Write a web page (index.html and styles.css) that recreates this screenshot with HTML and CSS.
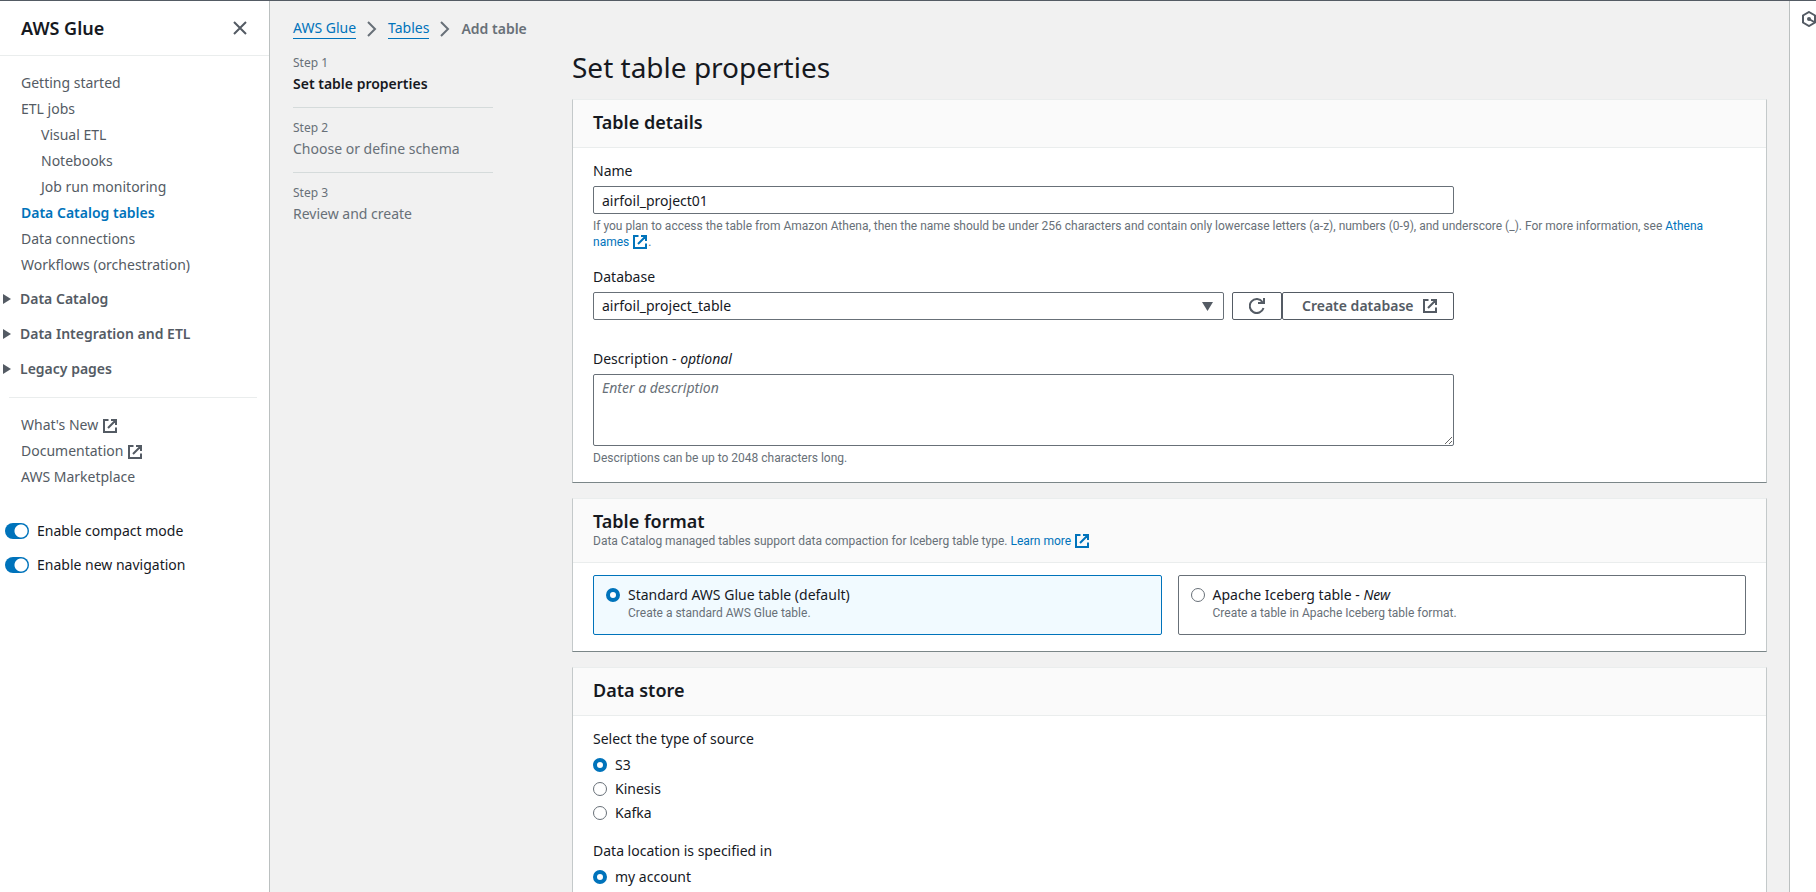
FILE: index.html
```html
<!DOCTYPE html>
<html lang="en">
<head>
<meta charset="utf-8">
<title>Add table - AWS Glue</title>
<link rel="stylesheet" href="styles.css">
</head>
<body>
<svg class="sprite" aria-hidden="true">
  <symbol id="external" viewBox="0 0 16 16"><path d="M9 2h5v5M6 10l8-8M14 9.500V14H2V2h4.500" fill="none" stroke="currentColor" stroke-width="2"/></symbol>
  <symbol id="chevron" viewBox="0 0 16 16"><path d="M4 1l7 7-7 7" fill="none" stroke="currentColor" stroke-width="2"/></symbol>
</svg>
<div class="app">
  <nav class="sidebar" aria-label="AWS Glue">
    <div class="sidebar-head">
      <h2 class="sidebar-title">AWS Glue</h2>
      <button class="icon-button" type="button" aria-label="Close navigation">
        <svg class="icon" viewBox="0 0 16 16"><path d="M2 2l12 12M14 2L2 14" fill="none" stroke="currentColor" stroke-width="2"/></svg>
      </button>
    </div>
    <ul class="nav-list nav-main">
      <li><a href="#">Getting started</a></li>
      <li><a href="#">ETL jobs</a>
        <ul class="nav-list nav-sub">
          <li><a href="#">Visual ETL</a></li>
          <li><a href="#">Notebooks</a></li>
          <li><a href="#">Job run monitoring</a></li>
        </ul>
      </li>
      <li><a class="active" href="#">Data Catalog tables</a></li>
      <li><a href="#">Data connections</a></li>
      <li><a href="#">Workflows (orchestration)</a></li>
    </ul>
    <div class="sections">
      <button class="section" type="button" aria-expanded="false"><svg class="caret" viewBox="0 0 8 10"><path d="M0 0l8 5-8 5z" fill="currentColor"/></svg>Data Catalog</button>
      <button class="section" type="button" aria-expanded="false"><svg class="caret" viewBox="0 0 8 10"><path d="M0 0l8 5-8 5z" fill="currentColor"/></svg>Data Integration and ETL</button>
      <button class="section" type="button" aria-expanded="false"><svg class="caret" viewBox="0 0 8 10"><path d="M0 0l8 5-8 5z" fill="currentColor"/></svg>Legacy pages</button>
    </div>
    <ul class="nav-list nav-links">
      <li><a href="#">What's New <svg class="icon"><use href="#external"/></svg></a></li>
      <li><a href="#">Documentation <svg class="icon"><use href="#external"/></svg></a></li>
      <li><a href="#">AWS Marketplace</a></li>
    </ul>
    <div class="toggles">
      <label class="toggle"><input class="switch" type="checkbox" checked>Enable compact mode</label>
      <label class="toggle"><input class="switch" type="checkbox" checked>Enable new navigation</label>
    </div>
  </nav>

  <main class="main">
    <nav class="breadcrumb" aria-label="Breadcrumbs">
      <a href="#">AWS Glue</a><svg class="icon"><use href="#chevron"/></svg><a href="#">Tables</a><svg class="icon"><use href="#chevron"/></svg><span class="current">Add table</span>
    </nav>
    <div class="wizard">
      <ol class="steps">
        <li class="step step-active"><span class="step-number">Step 1</span><span>Set table properties</span></li>
        <li class="step"><span class="step-number">Step 2</span><span>Choose or define schema</span></li>
        <li class="step"><span class="step-number">Step 3</span><span>Review and create</span></li>
      </ol>
      <form class="content">
        <h1 class="page-title">Set table properties</h1>

        <section class="card">
          <header class="card-head"><h2>Table details</h2></header>
          <div class="card-body">
            <div class="field">
              <label class="label" for="name">Name</label>
              <input class="control narrow" id="name" type="text" value="airfoil_project01">
              <p class="hint">If you plan to access the table from Amazon Athena, then the name should be under 256 characters and contain only lowercase letters (a-z), numbers (0-9), and underscore (_). For more information, see <a href="#">Athena <span class="nowrap">names <svg class="icon"><use href="#external"/></svg></span></a>.</p>
            </div>
            <div class="field">
              <label class="label" for="database">Database</label>
              <div class="row narrow">
                <div class="select-wrap">
                  <select class="control select" id="database"><option>airfoil_project_table</option></select>
                  <svg class="select-caret" viewBox="0 0 11 9"><path d="M0 0h11L5.500 9z" fill="currentColor"/></svg>
                </div>
                <div class="actions">
                  <button class="button refresh" type="button" aria-label="Refresh databases"><svg class="icon" viewBox="0 0 16 16"><path d="M14.500 10A7 7 0 1 1 13.500 4M15 0v5H9" fill="none" stroke="currentColor" stroke-width="2"/></svg></button>
                  <button class="button create" type="button">Create database <svg class="icon"><use href="#external"/></svg></button>
                </div>
              </div>
            </div>
            <div class="field field-last">
              <label class="label" for="description">Description - <i>optional</i></label>
              <textarea class="control narrow area" id="description" placeholder="Enter a description"></textarea>
              <p class="hint">Descriptions can be up to 2048 characters long.</p>
            </div>
          </div>
        </section>

        <section class="card">
          <header class="card-head"><h2>Table format</h2><p class="subtitle">Data Catalog managed tables support data compaction for Iceberg table type. <a href="#">Learn more <svg class="icon"><use href="#external"/></svg></a></p></header>
          <div class="tiles">
            <label class="tile tile-selected"><input class="radio" type="radio" name="format" checked><span>Standard AWS Glue table (default)<small>Create a standard AWS Glue table.</small></span></label>
            <label class="tile"><input class="radio" type="radio" name="format"><span>Apache Iceberg table - <i>New</i><small>Create a table in Apache Iceberg table format.</small></span></label>
          </div>
        </section>

        <section class="card">
          <header class="card-head"><h2>Data store</h2></header>
          <div class="card-body">
            <fieldset class="group">
              <legend>Select the type of source</legend>
              <label class="option"><input class="radio" type="radio" name="source" checked>S3</label>
              <label class="option"><input class="radio" type="radio" name="source">Kinesis</label>
              <label class="option"><input class="radio" type="radio" name="source">Kafka</label>
            </fieldset>
            <fieldset class="group">
              <legend>Data location is specified in</legend>
              <label class="option"><input class="radio" type="radio" name="location" checked>my account</label>
            </fieldset>
          </div>
        </section>
      </form>
    </div>
  </main>

  <aside class="tools">
    <button class="icon-button" type="button" aria-label="Open tools">
      <svg class="icon" viewBox="0 0 16 16"><path d="M8 1l6 3.500v7L8 15l-6-3.500v-7zM8 8l6 3.500" fill="none" stroke="currentColor" stroke-width="2"/><circle cx="8" cy="8" r="2" fill="currentColor"/></svg>
    </button>
  </aside>
</div>
</body>
</html>
```
FILE: styles.css
```css
* { box-sizing: border-box; }

body {
  margin: 0;
  height: 100vh;
  overflow: hidden;
  background: #f1f1f1;
  color: #16191f;
  font: 14px/20px "Noto Sans", "Open Sans", sans-serif;
}

h1, h2, p, ul, ol, fieldset { margin: 0; padding: 0; }
h2 { font-weight: 600; }
ul, ol { list-style: none; }
a { color: #0073bb; text-decoration: none; }
button, input, select, textarea { font: inherit; color: inherit; }
button { cursor: pointer; }

.sprite { display: none; }
.nowrap { white-space: nowrap; }
.icon { width: 16px; height: 16px; flex: none; vertical-align: middle; }

.app {
  display: flex;
  height: 100%;
  border-top: 1px solid #545b64;
}

.icon-button {
  display: flex;
  padding: 0;
  border: 0;
  background: none;
  color: #545b64;
}

/* Side navigation */
.sidebar {
  flex: 0 0 270px;
  border-right: 1px solid #bbc0c0;
  background: #fff;
  color: #545b64;
}

.sidebar-head {
  display: flex;
  align-items: center;
  justify-content: space-between;
  height: 55px;
  padding: 0 21px;
  border-bottom: 1px solid #eaeded;
}

.sidebar-title { color: #16191f; font-size: 18px; line-height: 22px; }
.nav-list a { display: block; padding: 3px 0; color: #545b64; }
.nav-list a.active { color: #0073bb; font-weight: 600; }
.nav-main { padding: 14px 21px 0; }
.nav-sub { padding-left: 20px; }

.sections {
  display: flex;
  flex-direction: column;
  gap: 15px;
  margin: 11px 12px 0 3px;
  padding-bottom: 18px;
}

.section {
  display: flex;
  align-items: center;
  gap: 9px;
  padding: 0;
  border: 0;
  background: none;
  font-weight: 600;
}

.caret { width: 8px; height: 10px; }

.nav-links {
  margin: 0 12px 0 9px;
  padding: 14px 12px 0;
  border-top: 1px solid #eaeded;
}

.toggles {
  display: flex;
  flex-direction: column;
  gap: 14px;
  padding: 31px 5px 0;
  color: #16191f;
}

.toggle { display: flex; align-items: center; gap: 8px; }

.switch {
  appearance: none;
  width: 24px;
  height: 16px;
  margin: 0;
  border-radius: 8px;
  background: #0073bb radial-gradient(circle at 16px 8px, #fff 6px, transparent 7px);
}

/* Main column */
.main { flex: 1; min-width: 0; padding: 17px 22px 0 23px; }

.breadcrumb { display: flex; align-items: center; gap: 8px; color: #687078; }
.breadcrumb a { border-bottom: 1px solid #0073bb; }
.current { font-weight: 600; }

.wizard { display: flex; justify-content: space-between; gap: 79px; }

.steps { flex: 0 0 200px; padding-top: 16px; color: #687078; }

.step {
  display: flex;
  flex-direction: column;
  gap: 3px;
  margin-bottom: 12px;
  padding-bottom: 13px;
  border-bottom: 1px solid #d5dbdb;
}

.step:last-child { border-bottom: 0; }
.step-active { color: #16191f; font-weight: 600; }
.step-number { color: #687078; font-size: 12px; font-weight: 400; line-height: 16px; }

.content { flex: 1; min-width: 0; }
.page-title { padding: 10px 0 14px; font-size: 28px; font-weight: 400; line-height: 36px; }

.card {
  margin-bottom: 15px;
  border: 1px solid #c4c9ca;
  border-top-color: #eaeded;
  border-bottom-color: #7b8688;
  background: #fff;
}

.card-head {
  padding: 11px 20px 14px;
  border-bottom: 1px solid #eaeded;
  background: #fafafa;
}

.card-head h2 { font-size: 18px; line-height: 22px; }
.subtitle, .hint, .tile small {
  color: #687078;
  font-family: Roboto, "Noto Sans", sans-serif;
  font-size: 12px;
  line-height: 16px;
}
.card-head .subtitle { margin: 1px 0 -1px; }
.subtitle .icon, .hint .icon { vertical-align: top; }
.card-body { padding: 13px 20px 16px; }

.field { margin-bottom: 17px; }
.field-last { margin: 29px 0 0; }
.label { display: block; margin-bottom: 5px; }
.narrow { width: calc(75% - 4px); }

.control {
  display: block;
  height: 28px;
  padding: 0 8px;
  border: 1px solid #687078;
  border-radius: 2px;
  background-color: #fff;
}

.hint { padding-top: 4px; }
.row { display: flex; gap: 8px; }

.select-wrap { position: relative; flex: 1; min-width: 0; }
.select { width: 100%; appearance: none; }

.select-caret {
  position: absolute;
  top: 10px;
  right: 11px;
  width: 11px;
  height: 9px;
  color: #545b64;
  pointer-events: none;
}

.actions { display: flex; }

.button {
  display: flex;
  align-items: center;
  justify-content: center;
  gap: 8px;
  height: 28px;
  padding: 0 15px;
  border: 1px solid #545b64;
  border-radius: 2px;
  background: #fff;
  color: #545b64;
  font-weight: 600;
  white-space: nowrap;
}

.refresh { width: 50px; }
.create { width: 172px; padding-left: 19px; }
.area { height: 72px; padding: 3px 8px; resize: vertical; }
.area::placeholder { color: #687078; font-style: italic; }

/* Tiles and radio groups */
.tiles {
  display: grid;
  grid-template-columns: 1fr 1fr;
  gap: 16px;
  padding: 12px 20px 16px;
}

.tile {
  display: flex;
  gap: 8px;
  height: 60px;
  padding: 9px 12px;
  border: 1px solid #687078;
  border-radius: 2px;
}

.tile-selected { border-color: #0073bb; background: #f1faff; }
.tile small { display: block; }

.radio {
  appearance: none;
  flex: none;
  width: 14px;
  height: 14px;
  margin: 3px 0;
  border: 1px solid #687078;
  border-radius: 50%;
  background: #fff;
}

.radio:checked { border: 4px solid #0073bb; }

.group { margin-bottom: 14px; border: 0; }
.group legend { padding: 0 0 6px; }
.option { display: flex; gap: 8px; margin-bottom: 4px; }

/* Tools strip */
.tools {
  flex: 0 0 27px;
  overflow: hidden;
  padding: 10px 0 0 11px;
  border-left: 1px solid #bbc0c0;
  background: #fff;
}
```
